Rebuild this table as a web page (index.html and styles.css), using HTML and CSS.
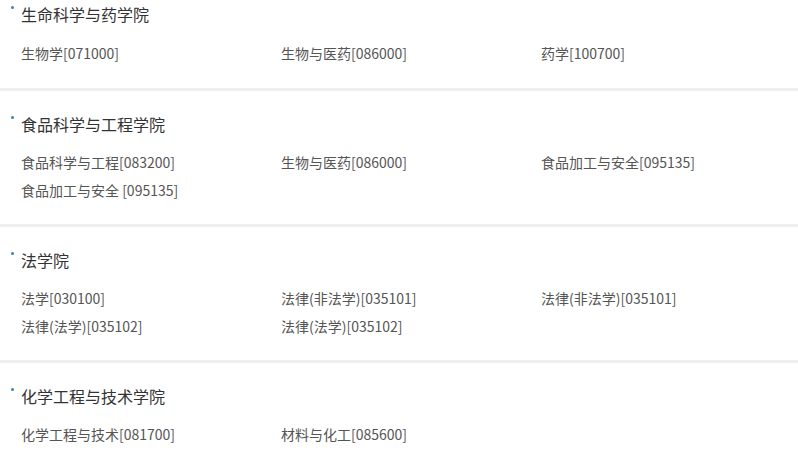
FILE: index.html
```html
<!DOCTYPE html>
<html lang="zh-CN">
<head>
<meta charset="utf-8">
<link rel="stylesheet" href="styles.css">
</head>
<body>
<div class="list">
  <section class="college first">
    <h2 class="title">生命科学与药学院</h2>
    <div class="majors">
      <span>生物学[071000]</span>
      <span>生物与医药[086000]</span>
      <span>药学[100700]</span>
    </div>
  </section>
  <section class="college">
    <h2 class="title">食品科学与工程学院</h2>
    <div class="majors">
      <span>食品科学与工程[083200]</span>
      <span>生物与医药[086000]</span>
      <span>食品加工与安全[095135]</span>
      <span>食品加工与安全 [095135]</span>
    </div>
  </section>
  <section class="college">
    <h2 class="title">法学院</h2>
    <div class="majors">
      <span>法学[030100]</span>
      <span>法律(非法学)[035101]</span>
      <span>法律(非法学)[035101]</span>
      <span>法律(法学)[035102]</span>
      <span>法律(法学)[035102]</span>
    </div>
  </section>
  <section class="college">
    <h2 class="title">化学工程与技术学院</h2>
    <div class="majors">
      <span>化学工程与技术[081700]</span>
      <span>材料与化工[085600]</span>
    </div>
  </section>
</div>
</body>
</html>
```
FILE: styles.css
```css
html, body {
  margin: 0;
  padding: 0;
  background: #ffffff;
}
body {
  font-family: "Noto Sans CJK SC", "Noto Sans", sans-serif;
  width: 798px;
  height: 455px;
  overflow: hidden;
}
.list {
  display: flex;
  flex-direction: column;
  gap: 3px;
  background: #efefef;
}
.college {
  background: #ffffff;
  padding: 22px 0 20px 21px;
}
.college.first {
  padding-top: 3px;
  padding-bottom: 21px;
}
.title {
  position: relative;
  margin: 0 0 13px 0;
  font-size: 16px;
  line-height: 22px;
  font-weight: normal;
  color: #333333;
}
.first .title {
  margin-bottom: 14px;
}
.title::before {
  content: "";
  position: absolute;
  left: -10px;
  top: 3px;
  width: 3px;
  height: 3px;
  border-radius: 50%;
  background: #3a82c2;
}
.majors {
  display: grid;
  grid-template-columns: 260px 260px 260px;
  grid-auto-rows: 28px;
  font-size: 14px;
  line-height: 28px;
  color: #555555;
}
```
